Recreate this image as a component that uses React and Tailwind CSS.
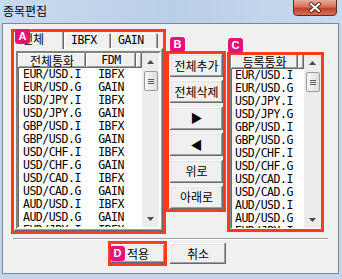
import React from "react";

const rowsLeft = [
  ["EUR/USD.I", "IBFX"],
  ["EUR/USD.G", "GAIN"],
  ["USD/JPY.I", "IBFX"],
  ["USD/JPY.G", "GAIN"],
  ["GBP/USD.I", "IBFX"],
  ["GBP/USD.G", "GAIN"],
  ["USD/CHF.I", "IBFX"],
  ["USD/CHF.G", "GAIN"],
  ["USD/CAD.I", "IBFX"],
  ["USD/CAD.G", "GAIN"],
  ["AUD/USD.I", "IBFX"],
  ["AUD/USD.G", "GAIN"],
  ["EUR/JPY.I", "IBFX"],
];

const mono = "font-['DejaVu_Sans_Mono',monospace] text-[11.5px] tracking-[-0.5px]";
const kr = "font-['Noto_Sans_CJK_KR',sans-serif] text-[12px]";
const raised =
  "bg-[#f0f0f0] shadow-[inset_-1px_-1px_0_#696969,inset_1px_1px_0_#ffffff,inset_-2px_-2px_0_#a0a0a0,inset_2px_2px_0_#e3e3e3]";
const headerCell =
  "bg-[#f0f0f0] shadow-[inset_-1px_-1px_0_#696969,inset_1px_1px_0_#ffffff,inset_-2px_-2px_0_#a0a0a0]";

function Tri({ dir }) {
  return (
    <svg width="7" height="4" viewBox="0 0 7 4">
      {dir === "up" ? (
        <path d="M3.5 0 L7 4 L0 4 Z" fill="#4a4a4a" />
      ) : (
        <path d="M0 0 L7 0 L3.5 4 Z" fill="#4a4a4a" />
      )}
    </svg>
  );
}

function ScrollBar() {
  return (
    <div className="flex h-full w-[17px] flex-col items-center bg-[#ececec]">
      <div className="flex h-[17px] items-center justify-center">
        <Tri dir="up" />
      </div>
      <div className="mt-[1px] flex h-[20px] w-[14px] flex-col items-center justify-center gap-[1px] rounded-[2px] border border-[#9c9c9c] bg-gradient-to-r from-[#f6f6f6] to-[#dedede]">
        <div className="h-px w-[6px] bg-[#5a5a5a]" />
        <div className="h-px w-[6px] bg-[#5a5a5a]" />
        <div className="h-px w-[6px] bg-[#5a5a5a]" />
      </div>
      <div className="flex-1" />
      <div className="flex h-[17px] items-center justify-center">
        <Tri dir="down" />
      </div>
    </div>
  );
}

function ListBox({ cols, rows, className }) {
  return (
    <div
      className={`flex h-[178px] overflow-hidden border-2 border-t-[#828282] border-l-[#828282] border-b-white border-r-white bg-white shadow-[inset_1px_1px_0_#696969] ${className}`}
    >
      <div className="flex flex-1 flex-col overflow-hidden">
        <div className="flex h-[15px] shrink-0">
          {cols.map((c) => (
            <div
              key={c.label}
              className={`flex shrink-0 items-center justify-center leading-[15px] ${headerCell} ${c.font}`}
              style={{ width: c.w }}
            >
              {c.label}
            </div>
          ))}
          <div className={`flex-1 ${headerCell}`} />
        </div>
        {rows.map((r) => (
          <div key={r[0]} className={`flex h-[13px] shrink-0 leading-[13px] text-black ${mono}`}>
            <div className="shrink-0 whitespace-nowrap" style={{ width: cols[0].w, paddingLeft: cols[0].pad }}>
              {r[0]}
            </div>
            {cols[1] && (
              <div className="shrink-0 text-center" style={{ width: cols[1].w }}>
                {r[1]}
              </div>
            )}
          </div>
        ))}
      </div>
      <ScrollBar />
    </div>
  );
}

function Badge({ letter, className }) {
  return (
    <div
      className={`absolute z-20 flex h-[15px] w-[15px] items-center justify-center rounded-[3px] bg-[#e2147c] font-['Liberation_Sans',sans-serif] text-[11px] font-bold text-white ${className}`}
    >
      {letter}
    </div>
  );
}

function CloseButton() {
  return (
    <svg width="44" height="16" viewBox="0 0 44 16" className="ml-auto mr-[5px]">
      <defs>
        <linearGradient id="cg" x1="0" y1="0" x2="0" y2="1">
          <stop offset="0" stopColor="#e9aa9a" />
          <stop offset="0.45" stopColor="#d66e59" />
          <stop offset="0.55" stopColor="#c2402a" />
          <stop offset="1" stopColor="#d8765a" />
        </linearGradient>
      </defs>
      <path d="M0.5 0 V12 Q0.5 15.5 4 15.5 H40 Q43.5 15.5 43.5 12 V0" fill="url(#cg)" stroke="#5e2a22" />
      <path d="M18 4 L26 11 M26 4 L18 11" stroke="#43201a" strokeWidth="4" strokeLinecap="round" />
      <path d="M18 4 L26 11 M26 4 L18 11" stroke="#ffffff" strokeWidth="2.2" strokeLinecap="round" />
    </svg>
  );
}

function Tab({ label, active, font }) {
  return (
    <div
      className={`shrink-0 rounded-t-[2px] bg-[#f0f0f0] pl-[7px] text-black shadow-[inset_1px_1px_0_#ffffff,inset_-1px_0_0_#696969,inset_-2px_0_0_#a0a0a0] ${font} ${
        active ? "relative z-10 -mb-px h-[19px] w-[49px] leading-[18px]" : "h-[15px] w-[47px] leading-[15px]"
      }`}
    >
      {label}
    </div>
  );
}

export default function App() {
  const leftCols = [
    { label: "전체통화", w: 68, font: kr, pad: 5 },
    { label: "FDM", w: 50, font: mono },
  ];
  const rightCols = [{ label: "등록통화", w: 67, font: kr, pad: 4 }];
  const buttons = ["전체추가", "전체삭제", "▶", "◀", "위로", "아래로"];

  return (
    <div className="relative h-[279px] w-[342px] overflow-hidden bg-[#c3d6ec]">
      <div className="flex h-[23px] bg-gradient-to-r from-[#c8daee] via-[#b9cfe8] to-[#c8daee]">
        <div className={`pl-[3px] pt-[4px] leading-[14px] text-black ${kr}`}>종목편집</div>
        <CloseButton />
      </div>

      <div className="ml-[2px] h-[251px] w-[337px] border border-[#7b8898] bg-[#f0f0f0]">
        <div className="flex items-start">
          <div className="ml-[11px] mt-[6px] w-[149px]">
            <div className="flex h-[18px] items-end pl-[1px]">
              <Tab label="전체" active font={kr} />
              <Tab label="IBFX" font={mono} />
              <Tab label="GAIN" font={mono} />
            </div>
            <div className="h-[183px] border border-t-white border-l-white border-b-[#696969] border-r-[#696969] pb-[1px] pl-[1px] pr-[1px] pt-[2px] shadow-[inset_-1px_-1px_0_#a0a0a0]">
              <ListBox cols={leftCols} rows={rowsLeft} className="w-[145px]" />
            </div>
          </div>

          <div className="ml-[7px] mt-[30px] flex w-[53px] flex-col gap-[3.4px]">
            {buttons.map((b) => (
              <div key={b} className={`flex h-[23px] items-center justify-center text-black ${raised} ${kr}`}>
                {b}
              </div>
            ))}
          </div>

          <div className="ml-[6px] mt-[28px]">
            <ListBox cols={rightCols} rows={rowsLeft} className="w-[94px]" />
          </div>
        </div>

        <div className="ml-[10px] mt-[7px] h-[2px] w-[315px] border-t border-b border-t-[#a0a0a0] border-b-white" />

        <div className="mt-[3px] flex gap-[4px] pl-[107px]">
          <div className={`flex h-[21px] w-[56px] items-center justify-center border border-black text-black ${raised} ${kr}`}>
            적용
          </div>
          <div className={`flex h-[21px] w-[56px] items-center justify-center text-black ${raised} ${kr}`}>
            취소
          </div>
        </div>
      </div>

      <div className="absolute left-[11px] top-[29px] z-20 h-[205px] w-[155px] border-[3px] border-[#ff3b1a]" />
      <div className="absolute left-[166px] top-[51px] z-20 h-[161px] w-[60px] border-[3px] border-[#ff3b1a]" />
      <div className="absolute left-[227px] top-[52px] z-20 h-[180px] w-[97px] border-[3px] border-[#ff3b1a]" />
      <div className="absolute left-[108px] top-[241px] z-20 h-[25px] w-[59px] border-[3px] border-[#ff3b1a]" />

      <Badge letter="A" className="left-[15px] top-[29px]" />
      <Badge letter="B" className="left-[170px] top-[37px]" />
      <Badge letter="C" className="left-[228px] top-[38px]" />
      <Badge letter="D" className="left-[110px] top-[246px]" />
    </div>
  );
}
